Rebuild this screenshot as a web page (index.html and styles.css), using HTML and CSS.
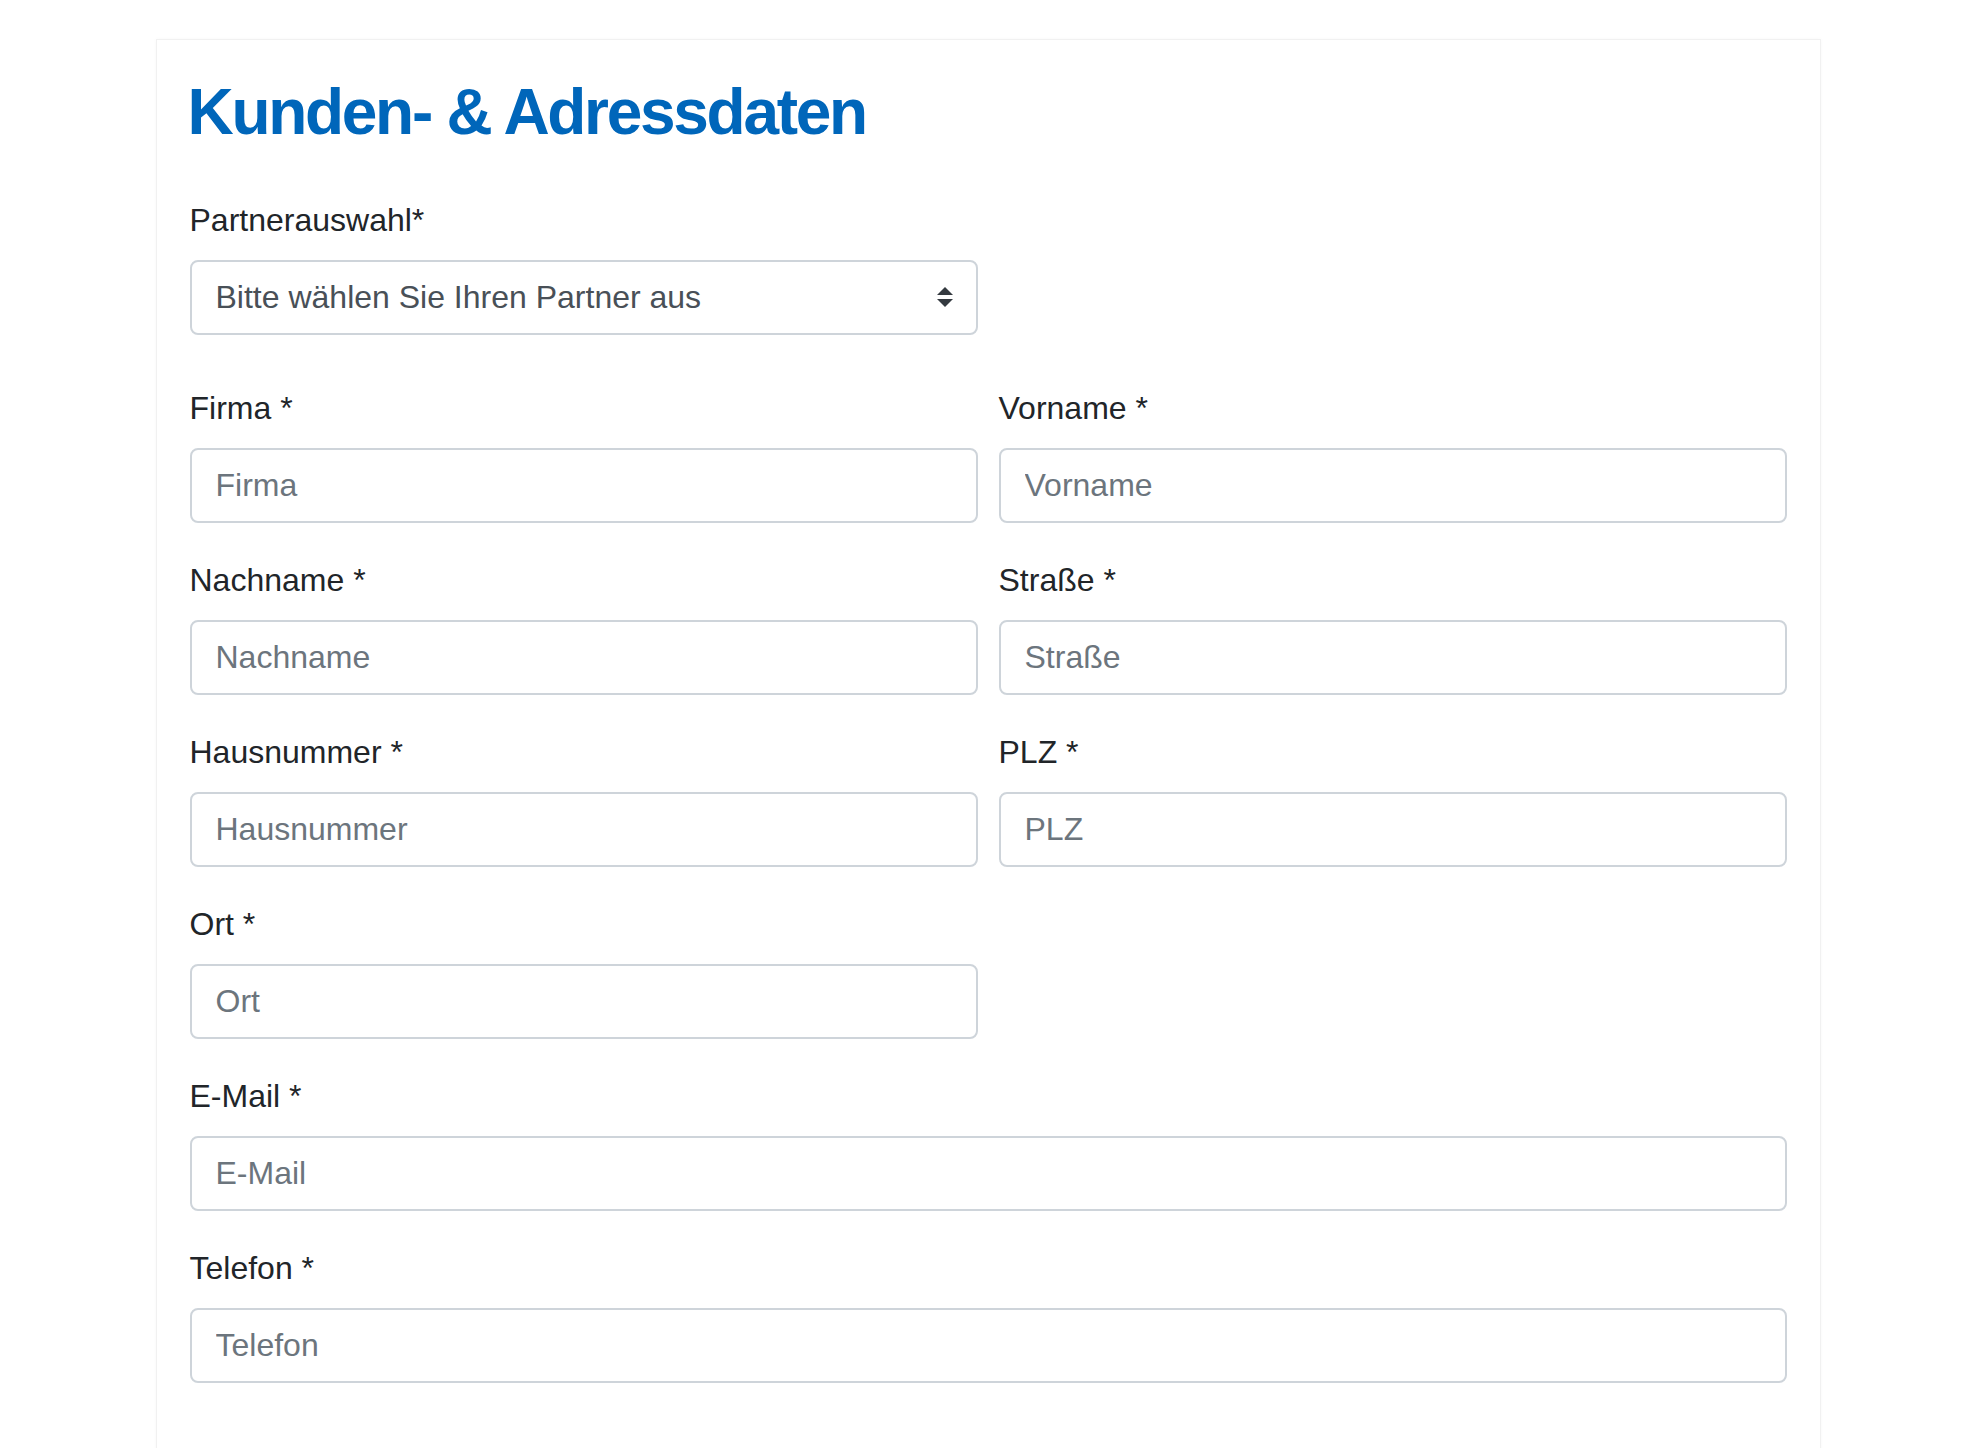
FILE: index.html
```html
<!DOCTYPE html>
<html lang="de">
<head>
    <meta charset="UTF-8">
    <meta name="viewport" content="width=device-width, initial-scale=1.0">
    <title>Kunden- &amp; Adressdaten</title>
    <link rel="stylesheet" href="styles.css">
</head>
<body>
    <div class="card">
        <h1 class="title">Kunden- &amp; Adressdaten</h1>

        <form class="fields">
            <div class="group partner">
                <label for="partner">Partnerauswahl*</label>
                <div class="select-wrap">
                    <select id="partner" class="control select">
                        <option>Bitte wählen Sie Ihren Partner aus</option>
                    </select>
                    <svg class="select-arrow" width="16" height="20" viewBox="0 0 8 10">
                        <path d="M4 0 L8 4 H0 Z M0 6 H8 L4 10 Z" fill="#343a40"/>
                    </svg>
                </div>
            </div>

            <div class="group">
                <label for="firma">Firma *</label>
                <input type="text" id="firma" class="control" placeholder="Firma">
            </div>
            <div class="group">
                <label for="vorname">Vorname *</label>
                <input type="text" id="vorname" class="control" placeholder="Vorname">
            </div>

            <div class="group">
                <label for="nachname">Nachname *</label>
                <input type="text" id="nachname" class="control" placeholder="Nachname">
            </div>
            <div class="group">
                <label for="strasse">Straße *</label>
                <input type="text" id="strasse" class="control" placeholder="Straße">
            </div>

            <div class="group">
                <label for="hausnummer">Hausnummer *</label>
                <input type="text" id="hausnummer" class="control" placeholder="Hausnummer">
            </div>
            <div class="group">
                <label for="plz">PLZ *</label>
                <input type="text" id="plz" class="control" placeholder="PLZ">
            </div>

            <div class="group first">
                <label for="ort">Ort *</label>
                <input type="text" id="ort" class="control" placeholder="Ort">
            </div>

            <div class="group full">
                <label for="email">E-Mail *</label>
                <input type="email" id="email" class="control" placeholder="E-Mail">
            </div>

            <div class="group full">
                <label for="telefon">Telefon *</label>
                <input type="tel" id="telefon" class="control" placeholder="Telefon">
            </div>
        </form>
    </div>
</body>
</html>
```

FILE: styles.css
```css
body {
    font-family: "Liberation Sans", Arial, sans-serif;
    background-color: #fff;
    color: #212529;
    margin: 0;
    padding: 0;
}

.card {
    width: 1597px;
    min-height: 1500px;
    margin: 39px auto 0;
    padding: 34px 33px;
    background-color: #fff;
    border: 1px solid #f1f1f1;
    box-shadow: 0 0 4px rgba(0, 0, 0, 0.03);
}

.title {
    margin: 0 0 45px -2px;
    font-size: 64px;
    font-weight: bold;
    line-height: 1.2;
    letter-spacing: -2.3px;
    color: #0066ba;
}

.fields {
    display: grid;
    grid-template-columns: 1fr 1fr;
    column-gap: 21px;
}

.group {
    margin-bottom: 33px;
}

.group.partner {
    grid-column: 1;
    margin-bottom: 49px;
}

.group.partner + .group {
    grid-column: 1;
}

.group.first {
    grid-column: 1;
}

.group.full {
    grid-column: 1 / span 2;
}

label {
    display: block;
    margin-bottom: 16px;
    font-size: 32px;
    line-height: 48px;
}

.control {
    display: block;
    box-sizing: border-box;
    width: 100%;
    height: 75px;
    padding: 11px 24px;
    border: 2px solid #ced4da;
    border-radius: 8px;
    background-color: #fff;
    font-family: inherit;
    font-size: 32px;
    line-height: 48px;
    color: #495057;
}

.control::placeholder {
    color: #6c757d;
    opacity: 1;
}

.select-wrap {
    position: relative;
}

.select {
    appearance: none;
    -webkit-appearance: none;
    padding-right: 60px;
}

.select-arrow {
    position: absolute;
    right: 25px;
    top: 27px;
    pointer-events: none;
}
```
